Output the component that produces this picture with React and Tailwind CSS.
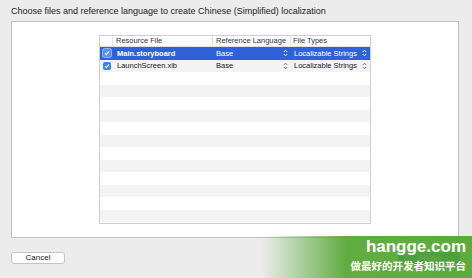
import React from "react";

const rows = [
  { file: "Main.storyboard", lang: "Base", type: "Localizable Strings", selected: true },
  { file: "LaunchScreen.xib", lang: "Base", type: "Localizable Strings", selected: false },
];

function Stepper({ color }) {
  return (
    <svg width="5" height="8" viewBox="0 0 5 8" fill="none" stroke={color} strokeWidth="1">
      <path d="M0.8 3 L2.5 1.2 L4.2 3" />
      <path d="M0.8 5 L2.5 6.8 L4.2 5" />
    </svg>
  );
}

function Checkbox({ selected }) {
  return (
    <div
      className={
        "w-[8px] h-[8px] rounded-[2px] flex items-center justify-center " +
        (selected ? "bg-[#5a8ff0] ring-1 ring-[#8fb4f5]" : "bg-[#3c82ec]")
      }
    >
      <svg width="6" height="6" viewBox="0 0 6 6" fill="none" stroke="white" strokeWidth="1.1">
        <path d="M1 3.2 L2.4 4.6 L5 1.4" />
      </svg>
    </div>
  );
}

export default function App() {
  const filler = Array.from({ length: 13 });

  return (
    <div
      className="relative w-[472px] h-[278px] bg-[#ececec] overflow-hidden"
      style={{ fontFamily: '"Liberation Sans", Arial, sans-serif' }}
    >
      <div className="pt-[6px] pl-[11px] text-[9px] leading-[11px] text-[#222]">
        Choose files and reference language to create Chinese (Simplified) localization
      </div>

      <div className="ml-[11px] mt-[4px] w-[448px] h-[217px] bg-white border border-[#c2c2c2] flex justify-center pt-[13px]">
        <div className="w-[272px] h-[189px] border border-[#cfcfcf] overflow-hidden flex flex-col text-[7.5px] text-[#222]">
          {/* header */}
          <div className="flex h-[11px] shrink-0 items-center border-b border-[#e2e2e2] bg-white text-[#333] whitespace-nowrap">
            <div className="w-[13px] h-full border-r border-[#e2e2e2]" />
            <div className="w-[100px] h-full border-r border-[#e2e2e2] pl-[3px] leading-[10px] overflow-hidden">Resource File</div>
            <div className="w-[78px] h-full border-r border-[#e2e2e2] pl-[3px] leading-[10px] overflow-hidden">Reference Language</div>
            <div className="flex-1 h-full pl-[2px] leading-[10px] overflow-hidden">File Types</div>
          </div>

          {rows.map((r, i) => (
            <div
              key={r.file}
              className={
                "flex h-[12.5px] shrink-0 items-center whitespace-nowrap " +
                (r.selected ? "bg-[#2f62d8] text-white" : i % 2 ? "bg-[#f3f3f3]" : "bg-white")
              }
            >
              <div className="w-[13px] flex justify-center">
                <Checkbox selected={r.selected} />
              </div>
              <div className={"w-[100px] pl-[4px] " + (r.selected ? "font-bold" : "")}>{r.file}</div>
              <div className="w-[78px] pl-[3px] pr-[3px] flex items-center justify-between">
                <span>{r.lang}</span>
                <Stepper color={r.selected ? "#ffffff" : "#777"} />
              </div>
              <div className="flex-1 pl-[3px] pr-[3px] flex items-center justify-between">
                <span>{r.type}</span>
                <Stepper color={r.selected ? "#ffffff" : "#777"} />
              </div>
            </div>
          ))}

          {filler.map((_, i) => (
            <div
              key={i}
              className={"h-[12.5px] shrink-0 " + (i % 2 === 0 ? "bg-white" : "bg-[#f3f3f3]")}
            />
          ))}
        </div>
      </div>

      <div className="flex items-center justify-between px-[11px] mt-[14px]">
        <button className="w-[54px] h-[12px] bg-white border border-[#c4c4c4] rounded-[3px] text-[8px] leading-[10px] text-[#222]">
          Cancel
        </button>
        <button className="w-[62px] h-[12px] mr-[1px] bg-[#3d86ee] rounded-[3px] text-[8px] leading-[10px] text-white">
          Finish
        </button>
      </div>

      {/* watermark overlay */}
      <div className="absolute left-[262px] top-[236px] w-[210px] h-[42px] bg-gradient-to-r from-[#4ea42a00] via-[#4ea42ae0] via-40% to-[#4ea42ae8]" />
      <div className="absolute right-[6px] top-[237px] flex flex-col items-end text-white">
        <div className="text-[17px] leading-[20px] font-bold">hangge.com</div>
        <div
          className="text-[10.5px] leading-[18px] font-bold"
          style={{ fontFamily: '"Noto Sans CJK SC", sans-serif' }}
        >
          做最好的开发者知识平台
        </div>
      </div>
    </div>
  );
}
